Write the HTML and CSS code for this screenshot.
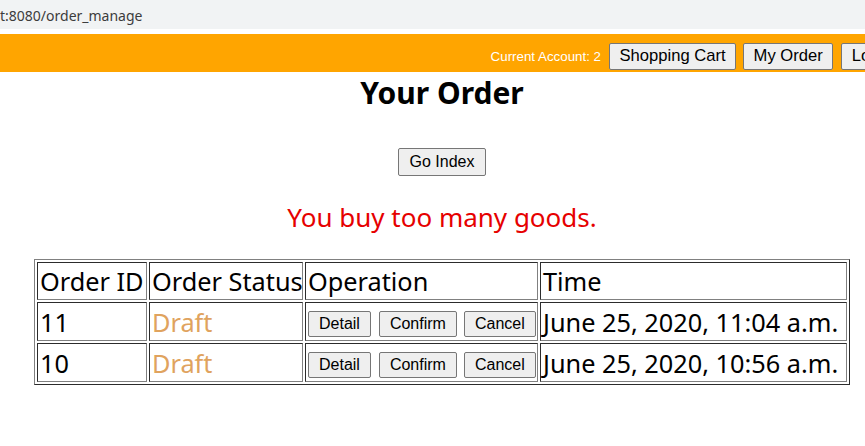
FILE: index.html
```html
<!DOCTYPE html>
<html lang="en">
<head>
<meta charset="utf-8">
<title>Your Order</title>
<link rel="stylesheet" href="styles.css">
</head>
<body>
<div class="addressbar"><span class="url">t:8080/order_manage</span></div>
<nav class="topnav">
  <span class="account">Current Account: 2</span>
  <button class="btn nav-btn">Shopping Cart</button>
  <button class="btn nav-btn">My Order</button>
  <button class="btn nav-btn">Logout</button>
</nav>
<main class="page">
  <h1 class="title">Your Order</h1>
  <div class="actions"><button class="btn go-btn">Go Index</button></div>
  <p class="error">You buy too many goods.</p>
  <table class="orders">
    <tr class="head">
      <td class="c-id">Order ID</td>
      <td class="c-status">Order Status</td>
      <td class="c-op">Operation</td>
      <td class="c-time">Time</td>
    </tr>
    <tr class="row">
      <td>11</td>
      <td class="draft">Draft</td>
      <td><div class="ops"><button class="btn op-btn">Detail</button><button class="btn op-btn">Confirm</button><button class="btn op-btn">Cancel</button></div></td>
      <td>June 25, 2020, 11:04 a.m.</td>
    </tr>
    <tr class="row">
      <td>10</td>
      <td class="draft">Draft</td>
      <td><div class="ops"><button class="btn op-btn">Detail</button><button class="btn op-btn">Confirm</button><button class="btn op-btn">Cancel</button></div></td>
      <td>June 25, 2020, 10:56 a.m.</td>
    </tr>
  </table>
</main>
</body>
</html>
```
FILE: styles.css
```css
html, body {
  margin: 0;
  padding: 0;
  overflow: hidden;
  background: #ffffff;
}
body {
  width: 884px;
  font-family: "Noto Sans", "Open Sans", sans-serif;
  color: #000;
}
.addressbar {
  height: 29px;
  background: #f1f3f4;
  margin-bottom: 5px;
  display: flex;
  align-items: center;
}
.url {
  font-family: "Noto Sans", sans-serif;
  font-size: 14px;
  color: #3c3c3c;
  margin-top: 2px;
}
.topnav {
  width: 913px;
  height: 38px;
  background: #ffa500;
  display: flex;
  align-items: center;
  justify-content: flex-end;
  gap: 7px;
  box-sizing: border-box;
  padding-top: 7px;
}
.account {
  font-family: "Liberation Sans", Arial, sans-serif;
  font-size: 13.33px;
  color: #ffffff;
  margin-right: 1px;
}
.btn {
  font-family: "Liberation Sans", Arial, sans-serif;
  font-size: 16px;
  color: #000;
  background: #efefef;
  border: 1px solid #767676;
  border-radius: 2px;
  box-sizing: border-box;
  margin: 0;
  line-height: 1;
}
.nav-btn {
  font-size: 16.6px;
  height: 27px;
  padding: 0 9.5px;
}
.nav-btn:last-child {
  margin-left: 1px;
}
.page {
  text-align: center;
}
.title {
  font-size: 30px;
  font-weight: 700;
  margin: 2px 0 0;
  line-height: 38px;
}
.actions {
  margin-top: 36px;
}
.go-btn {
  height: 28px;
  padding: 0 11px;
}
.error {
  color: #e60000;
  font-size: 26px;
  margin: 24px 0 0;
  line-height: 34px;
}
.orders {
  margin: 25px auto 0;
  width: 816px;
  table-layout: fixed;
  border: 1px outset #808080;
  border-spacing: 2px;
  text-align: left;
  font-size: 25.3px;
}
.orders td {
  border: 1px inset #808080;
  padding: 0 2px;
  white-space: nowrap;
  line-height: 32px;
}
.head td {
  height: 36px;
}
.row td {
  height: 37px;
}
.c-id { width: 104px; }
.c-status { width: 148px; }
.c-op { width: 227px; }
.draft {
  color: #e0a35e;
}
.ops {
  display: flex;
  gap: 7px;
  padding-top: 4px;
}
.op-btn {
  height: 26px;
  padding: 0 10px;
  font-size: 16px;
}
.op-btn + .op-btn {
  margin-left: 1px;
}
.op-btn + .op-btn + .op-btn {
  margin-left: 0;
}
```
